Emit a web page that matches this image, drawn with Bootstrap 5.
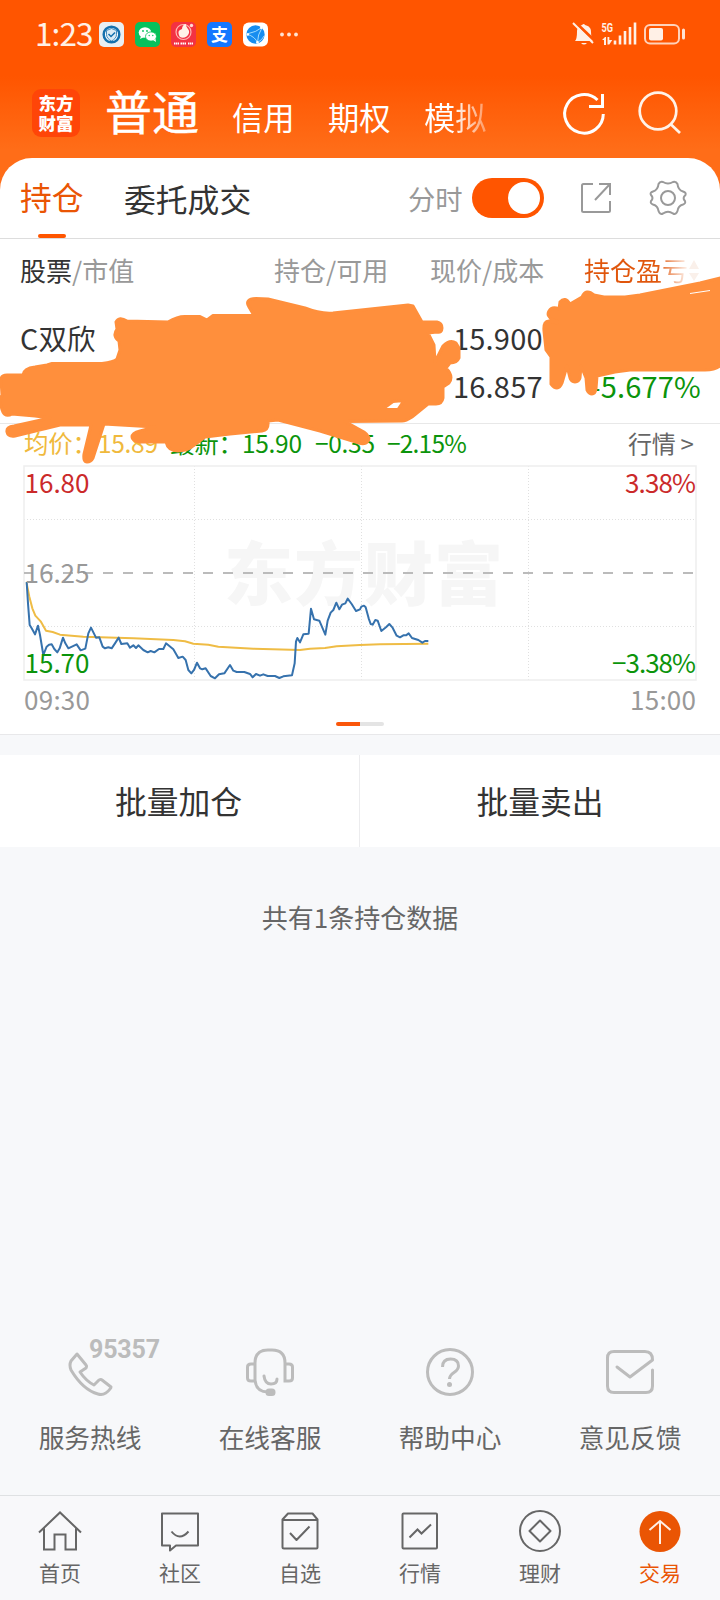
<!DOCTYPE html>
<html lang="zh-CN">
<head>
<meta charset="utf-8">
<meta name="viewport" content="width=device-width, initial-scale=1">
<title>持仓</title>
<link href="https://cdn.jsdelivr.net/npm/bootstrap@5.3.0/dist/css/bootstrap.min.css" rel="stylesheet">
<style>
body{margin:0;background:#f7f8fa;font-family:"Noto Sans CJK SC",sans-serif;color:#333}
svg{display:block;flex:none;overflow:visible}
.shell{width:720px;height:1600px;overflow:hidden;background:linear-gradient(#ff5500 0,#ff5500 76px,#ff6d18 150px,#ff6d18 200px,#f7f8fa 200px)}
.status{height:68px;padding-left:35px;padding-right:32px;color:#fff0e6}
.clock{width:64px;font-size:31.5px;letter-spacing:-.9px;line-height:64px;height:68px}
.apps{gap:11px}
.mast{height:90px;color:#fff;padding-left:32px;white-space:nowrap}
.brand{width:48px;height:48px;border-radius:9px;background:#ff4508;font-size:17.5px;line-height:19.5px;font-weight:900;text-align:center;padding-top:4px;margin-top:21px}
.acct{font-size:31.3px;line-height:40px;margin-top:29px;flex:none}
.acct-on{font-size:47px;line-height:60px;margin-top:12px;margin-left:25px;width:127px;flex:none;-webkit-text-stroke:.4px #fff}
.fade-end{background:linear-gradient(90deg,#fff 45%,rgba(255,255,255,.35));-webkit-background-clip:text;background-clip:text;color:transparent}
.sheet{background:#fff;border-radius:32px 32px 0 0;height:578px;border-bottom:1px solid #e8e8ea}
.tabs-row{height:81px;border-bottom:1px solid #ddd;padding:0 33px 0 20px;font-size:31.8px;line-height:77px}
.tab-on{color:#ea5504;width:104px;position:relative}
.tab-on::after{content:"";position:absolute;left:18px;bottom:0;width:28px;height:4px;border-radius:2px;background:#ff5500}
.minute{font-size:27.3px;color:#999;margin-left:auto;width:64px}
.toggle-on{width:72px;height:40px;border-radius:20px;background:#ff5500;padding:4px;margin-right:36px}
.knob{width:32px;height:32px;border-radius:50%;background:#fff}
.thead-row{height:64px;padding-left:20px;font-size:26px;line-height:62px;color:#999;white-space:nowrap}
.thead-row>*{flex:none}
.fade-sort{background:linear-gradient(90deg,#e0560c 70%,rgba(234,85,4,.12) 98%);-webkit-background-clip:text;background-clip:text;color:transparent}
.holding{height:121px;padding:10px 19px 0 20px;font-size:29px;line-height:48px;border-bottom:1px solid #e8e8e8}
.holding>div{letter-spacing:.2px}
.stock{font-size:28.5px;width:433px;padding-top:1px}
.down{color:#0b940b}
.info{height:36px;padding-left:24px;font-size:24.5px;line-height:38px;letter-spacing:-.3px;white-space:nowrap}
.info>*{flex:none}
.pager{width:48px;height:4px;border-radius:2px;margin:3px auto 0;background:linear-gradient(90deg,#fa560a 50%,#e4e4e4 50%)}
.batch{height:92px;margin-top:20px;background:#fff;font-size:31.8px;line-height:90px}
.batch>:first-child{border-right:1px solid #ececee;padding-right:2px}
.count{height:144px;font-size:26px;line-height:140px;color:#666}
.help{margin-top:339px;height:165px;color:#666;font-size:25.7px}
.help svg{height:80px}
.help .col span{display:block;line-height:50px;padding-top:2px}
.bottom-bar{height:105px;border-top:1px solid #dfe1e3;background:#f8f8fa;color:#666;font-size:21px}
.bottom-bar svg{margin:14px auto 0}
.bottom-bar span{display:block;line-height:32px;margin-top:4px}
.bottom-bar .now{color:#ea5504}
.ink{left:0;top:0;pointer-events:none}
</style>
</head>
<body>
<div class="shell d-flex flex-column position-relative">
  <header>
    <div class="status d-flex align-items-center">
      <div class="clock">1:23</div>
      <div class="apps d-flex">
        <svg width="25" height="25" viewBox="0 0 25 25"><rect width="25" height="25" rx="5" fill="#e9eef2"/><circle cx="12.500" cy="12.500" r="7.800" fill="#fff" stroke="#1470ad" stroke-width="2.500"/><path d="M12.500 6.500l5 2v4c0 3-2 5-5 6.500-3-1.500-5-3.500-5-6.500v-4z" fill="#dcebf4" stroke="#1470ad" stroke-width=".8"/><path d="M9.500 12l2.500 2.500 4-4" fill="none" stroke="#1470ad" stroke-width="1.500"/></svg>
        <svg width="25" height="25" viewBox="0 0 25 25"><rect width="25" height="25" rx="5" fill="#07c15c"/><ellipse cx="10" cy="10.500" rx="6.300" ry="5.300" fill="#fff"/><path d="M6 14l-1 3 4-2z" fill="#fff"/><ellipse cx="16" cy="14.500" rx="5.500" ry="4.600" fill="#fff" stroke="#07c15c" stroke-width=".8"/><path d="M18 18l3 2-.5-3z" fill="#fff"/><g fill="#07c15c"><circle cx="8" cy="9" r=".9"/><circle cx="12" cy="9" r=".9"/><circle cx="14.200" cy="13.500" r=".7"/><circle cx="17.800" cy="13.500" r=".7"/></g></svg>
        <svg width="25" height="25" viewBox="0 0 25 25"><rect width="25" height="25" rx="5" fill="#f33242"/><circle cx="12.500" cy="10" r="7.500" fill="none" stroke="#ffb9b4" stroke-width="1.200"/><path d="M9 15c-2-3-2-6 0-7l2-1c0-3 2-5 4-5-1 3 4 5 3 9-1 4-6 6-9 4z" fill="#fff4e8"/><circle cx="20.500" cy="3.500" r="1.700" fill="#ffd9d2"/><path d="M3 21.500h5M9.500 21.500h6M17 21.500h5" stroke="#fff" stroke-width="2" stroke-dasharray="1.500 .5"/></svg>
        <svg width="25" height="25" viewBox="0 0 25 25"><rect width="25" height="25" rx="5" fill="#1677ff"/><text x="12.500" y="18.800" font-size="17" font-weight="700" text-anchor="middle" fill="#fff">支</text></svg>
        <svg width="25" height="25" viewBox="0 0 26 25"><rect width="26" height="25" rx="6" fill="#fff"/><circle cx="13" cy="12.500" r="9.500" fill="#168df0"/><g fill="none" stroke="#b6e8ff" stroke-width=".9"><path d="M4 12Q14 10 20 5M4 12q9 3 11 9M20 5q-5 8-5 16M15 21q5-3 7-7"/></g><circle cx="5" cy="12.500" r="1.300" fill="#fff"/><circle cx="19" cy="5.500" r="1.300" fill="#fff"/><circle cx="15" cy="20.500" r="1.300" fill="#fff"/></svg>
        <svg width="20" height="25" viewBox="0 0 20 25" fill="#ffe3d2"><circle cx="3" cy="12.500" r="1.900"/><circle cx="10" cy="12.500" r="1.900"/><circle cx="17" cy="12.500" r="1.900"/></svg>
      </div>
      <svg class="ms-auto" style="margin-top:2px" width="116" height="26" viewBox="0 0 116 26" fill="#fff0e6"><path d="M3 19q2-2 2-9c0-4 2-6 5-7q2-2 3 0c4 1 6 3 6 7q0 7 3 9zM9 21h6q-3 3-6 0z"/><path d="M2 -1l22 21" stroke="#ff5500" stroke-width="3"/><path d="M1 1l20 20" stroke="#fff0e6" stroke-width="2"/><text x="29.500" y="10" font-family="Roboto" font-weight="700" font-size="12.500" textLength="11.500" lengthAdjust="spacingAndGlyphs">5G</text><path d="M30 18l3-3h1v8h-2v-5zM35.500 15h1.800v3h3l-3 4.500h-1.800z"/><path d="M43 22.500v-4M48 22.500v-9M53 22.500V9M58 22.500V5M63 22.500V.5" stroke="#fff0e6" stroke-width="2.600"/><rect x="73" y="3" width="34" height="18.500" rx="5" fill="none" stroke="#ffd2ba" stroke-width="2"/><rect x="77" y="6" width="14" height="12.500" rx="2"/><path d="M111.500 8v8" stroke="#ffe2d2" stroke-width="3" stroke-linecap="round"/></svg>
    </div>
    <nav class="mast d-flex align-items-start">
      <div class="brand">东方<br>财富</div>
      <div class="acct-on">普通</div>
      <div class="acct" style="width:96px">信用</div>
      <div class="acct" style="width:96px">期权</div>
      <div class="acct fade-end">模拟</div>
      <svg width="44" height="44" viewBox="0 0 44 44" style="margin:23px 0 0 75px" fill="none" stroke="#fff" stroke-width="3"><path d="M35.500 9A19.300 19.300 0 1 0 41.300 23M40.500 3v12.500H27"/></svg>
      <svg width="44" height="44" viewBox="0 0 44 44" style="margin:23px 0 0 32px" fill="none" stroke="#fff2e8" stroke-width="2.700"><circle cx="20" cy="20" r="18.300"/><path d="M32.500 33l9.500 9"/></svg>
    </nav>
  </header>

  <section class="sheet">
    <div class="tabs-row d-flex align-items-center">
      <div class="tab-on h-100">持仓</div>
      <div>委托成交</div>
      <div class="minute">分时</div>
      <div class="toggle-on d-flex justify-content-end"><div class="knob"></div></div>
      <svg width="32" height="32" viewBox="0 0 32 32" fill="none" stroke="#999" stroke-width="2"><path d="M13 2H3.500Q2 2 2 3.500v25Q2 30 3.500 30h25q1.500 0 1.500-1.500V19M19 2h11v11M30 2L15 18"/></svg>
      <svg width="38" height="38" viewBox="0 0 38 38" style="margin-left:37px" fill="none" stroke="#999" stroke-width="2"><path d="M14 3Q19 6 24 3Q27 2 28.500 5Q29 11 34 12.500Q37.500 13.500 36.500 16Q33 19 36 22Q37 24.500 34 25.500Q29 27 28.500 32Q27 36 24 34.500Q19 31 14 34.500Q11 36 9.500 32Q9 27 4 25.500Q1 24.500 2 22Q5 19 2 16Q.5 13.500 4 12.500Q9 11 9.500 5Q11 2 14 3z" stroke-linejoin="round"/><circle cx="19" cy="19" r="7"/></svg>
    </div>
    <div class="thead-row d-flex">
      <div style="width:254px"><span style="color:#333">股票</span>/市值</div>
      <div style="width:156px">持仓/可用</div>
      <div style="width:154px">现价/成本</div>
      <div class="fade-sort">持仓盈亏</div>
      <svg width="12" height="24" viewBox="0 0 12 24" style="margin-top:20px" fill="#faf0ea"><path d="M6 1l5 9H1zM6 22l5-8H1z"/></svg>
    </div>
    <div class="holding d-flex">
      <div class="stock">C双欣</div>
      <div>15.900<br>16.857</div>
      <div class="down ms-auto align-self-start" style="padding-top:48px">-5.677%</div>
    </div>
    <div class="info d-flex down">
      <div style="width:74px;color:#f0b93c">均价：</div>
      <div style="width:72px;color:#f0b93c">15.89</div>
      <div style="width:72px">最新：</div>
      <div style="width:73px">15.90</div>
      <div style="width:72px">−0.35</div>
      <div style="width:241px;letter-spacing:-.8px">−2.15%</div>
      <div style="color:#666;font-size:24px">行情 &gt;</div>
    </div>
    <svg width="720" height="259" viewBox="0 0 720 259">
      <text x="224" y="140" font-size="69" font-weight="900" fill="#f6f6f6" textLength="279">东方财富</text>
      <g fill="none" stroke="#e0e0e0" stroke-dasharray="1 2"><path d="M24 59.500h672M24 166.500h672M194.500 6v214M361.500 6v214M528.500 6v214"/></g>
      <rect x="24" y="6" width="672" height="214" fill="none" stroke="#eee" stroke-width="1.500"/>
      <path d="M24 113h672" stroke="#bbb" stroke-width="2" stroke-dasharray="10 10" stroke-dashoffset="1"/>
      <g transform="scale(.33333)" fill="none" stroke-width="6" stroke-linejoin="round">
        <path stroke="#efbc45" d="M80 370 88 410 97 445 106 467 122 484 138 512 158 516 180 524 250 530 400 535 520 540 555 544 580 551 625 554 655 560 760 566 900 570 930 566 975 564 1010 559 1080 555 1140 553 1285 551"/>
        <path stroke="#3672ad" d="M80 366 84 430 89 495 95 505 105 523 114 497 120 525 130 585 140 560 147 554 155 553 163 567 172 577 179 565 189 533 196 550 205 565 230 553 242 571 256 566 265 520 273 503 288 533 298 532 308 560 315 565 325 562 335 565 345 550 356 533 364 552 382 550 390 563 400 556 408 564 415 556 430 570 443 577 452 573 463 577 477 567 490 567 498 550 520 568 535 594 548 590 557 600 565 630 574 640 582 630 591 608 600 625 607 628 617 625 632 648 645 655 657 643 673 640 690 615 700 632 710 636 733 636 750 642 758 652 768 642 780 647 790 643 803 648 825 648 838 654 850 649 876 646 884 610 888 545 892 534 900 547 910 523 926 521 933 446 942 478 958 482 976 524 983 482 992 458 1000 450 1009 428 1018 448 1026 434 1036 430 1043 416 1055 432 1068 453 1080 448 1084 440 1092 437 1097 442 1106 475 1112 492 1118 494 1126 480 1133 482 1144 513 1158 502 1168 492 1177 502 1190 527 1200 532 1210 526 1218 526 1226 520 1236 534 1255 540 1267 548 1275 543 1285 543"/>
      </g>
      <g font-size="26">
        <text x="24.500" y="33" fill="#cb2a2a" textLength="65">16.80</text>
        <text x="24.500" y="123" fill="#999" textLength="65">16.25</text>
        <text x="24.500" y="213" fill="#0b940b" textLength="65">15.70</text>
        <text x="24" y="250" fill="#999" textLength="66">09:30</text>
        <text x="625" y="33" fill="#cb2a2a" textLength="71">3.38%</text>
        <text x="612" y="213" fill="#0b940b" textLength="84">−3.38%</text>
        <text x="630" y="250" fill="#999" textLength="66">15:00</text>
      </g>
    </svg>
    <div class="pager"></div>
  </section>

  <div class="batch d-flex text-center">
    <div style="width:360px">批量加仓</div>
    <div style="width:360px">批量卖出</div>
  </div>
  <div class="count text-center">共有1条持仓数据</div>

  <div class="help row g-0 text-center">
    <div class="col"><svg width="180" height="80" viewBox="0 0 180 80" fill="none" stroke="#bcbcbc" stroke-width="3" stroke-linejoin="round"><path d="M77 24l9 11q1 1 0 3l-6 4q6 9 14 13l5-5q2-1 3 0l9 7q0 1-1 2-5 7-12 5Q83 60 71 40q-2-5 0-9z"/><text x="89" y="28" font-family="Roboto" font-weight="700" font-size="25" fill="#bcbcbc" stroke="none" textLength="71">95357</text></svg><span>服务热线</span></div>
    <div class="col"><svg width="180" height="80" viewBox="0 0 180 80" fill="none" stroke="#bcbcbc" stroke-width="3"><path d="M75 52V33q0-13 13-13h4q13 0 13 13v18M75 50q1 12 13 12M75 34h-4q-3.500 0-3.500 3v11q0 3 3.500 3h4M105 34h4q3.500 0 3.500 3v11q0 3-3.500 3h-4z"/><path d="M84 46q1 8 7 8t6-5" stroke-linecap="round"/><rect x="87" y="60" width="7" height="4.500" rx="2" fill="#bcbcbc"/></svg><span>在线客服</span></div>
    <div class="col"><svg width="180" height="80" viewBox="0 0 180 80" fill="none" stroke="#bcbcbc" stroke-width="3"><circle cx="90" cy="42" r="22.500"/><path d="M82.500 37q0-8 8-8t8 7c0 7-9 6-9 13"/><circle cx="89.500" cy="54.500" r="2.500" fill="#bcbcbc" stroke="none"/></svg><span>帮助中心</span></div>
    <div class="col"><svg width="180" height="80" viewBox="0 0 180 80" fill="none" stroke="#bcbcbc" stroke-width="3" stroke-linejoin="round" stroke-linecap="round"><path d="M112.500 40v16q0 6.500-6.500 6.500H74q-6.500 0-6.500-6.500V28q0-6.500 6.500-6.500h31q7.500 0 7.500 8.500L90 47 77 37"/></svg><span>意见反馈</span></div>
  </div>

  <nav class="bottom-bar row g-0 text-center">
    <div class="col"><svg width="44" height="42" viewBox="0 0 44 42" fill="none" stroke="#666" stroke-width="2"><path d="M1 22.500L22 2.500l21 20M6 18.500v21h10.500v-15h11v15H38v-21"/></svg><span>首页</span></div>
    <div class="col"><svg width="44" height="42" viewBox="0 0 44 42" fill="none" stroke="#666" stroke-width="2" stroke-linejoin="round"><path d="M4 3.500h36v32H18l-6 5v-5H4zM13.500 21.500q8 10 17 0"/></svg><span>社区</span></div>
    <div class="col"><svg width="44" height="42" viewBox="0 0 44 42" fill="none" stroke="#666" stroke-width="2" stroke-linejoin="round"><path d="M4.500 9.500L10 3.500h24.500l5 6v28q0 1-1 1H6q-1.500 0-1.500-1.500zM4.500 10H39.500M12 23l6.500 7 13-13.500"/></svg><span>自选</span></div>
    <div class="col"><svg width="44" height="42" viewBox="0 0 44 42" fill="none" stroke="#666" stroke-width="2"><rect x="4.500" y="3.500" width="34.500" height="35" rx="1"/><path d="M11.500 27.500l8-8 4 4 9.500-9"/></svg><span>行情</span></div>
    <div class="col"><svg width="44" height="42" viewBox="0 0 44 42" fill="none" stroke="#666" stroke-width="2" stroke-linejoin="round"><circle cx="22" cy="21" r="20"/><path d="M22 10.500L32.500 21 22 31.500 11.500 21z"/></svg><span>理财</span></div>
    <div class="col now"><svg width="44" height="42" viewBox="0 0 44 42" fill="none" stroke="#fff0e6" stroke-width="2"><circle cx="22" cy="21.500" r="20.500" fill="#ea5504" stroke="none"/><path d="M22 34V11M11.500 20L22 11l10.500 9"/></svg><span>交易</span></div>
  </nav>

  <svg class="ink position-absolute" width="720" height="480" viewBox="0 0 720 480" fill="#ff8f3c" stroke="#ff8f3c" stroke-width="3" stroke-linejoin="round">
    <path fill-rule="evenodd" d="M116 322Q119 316 127 321L168 322Q178 316 186 316.500L200 316.500 207 320 213 315.500 254 315.500 249 307Q244 299 256 298.500L268 299 305 308Q320 314 333 313L408 305 413 306 422 322 437 322Q442 323 442 328T437 332L428 333 434 345 435 362 443 346Q450 339 456 343L459 348V358Q457 363 450 363L446 368Q454 376 449 383L443 387V398Q442 404 436 404L428 404 412 417Q406 421 402 421L345 421.500 364 432Q371 437 368 441T359 443L320 431 278 420 268 421Q269 430 262 431L230 434 205 437 193 446Q188 451 178 451Q168 451 166 442L140 442Q132 441 132 437T140 431L155 427 104 424 93 458Q91 462 87 462T84 454L91 425 60 425 15 436Q8 437 7 432T14 426L50 418 35 416 12 414Q3 419 1 405Q-1 400 2 395L1 380Q1 375 7 375L23 375Q24 368 35 367L47 365 52 363.500 102 363.500Q114 362 117 359L120 350 119 341Q112 336 117 329zM382 409.500L398 409.500 404 400.500 393 401.500z"/>
    <path d="M544 331Q543 320 550 321L557 323V321L553 320Q546 316 549 311T559 309L560 302Q565 296 570 304L582 297Q586 288 594 295L604 297 625 297 640 295 700 283 724 277 722 363Q719 370 705 370L630 370 615 372 597 376 596 389Q595 394 592 394T587 390L586 378 581 366 580 378Q579 382 575 382T570 378L567 366 562 383Q560 388 557 388T551 384V357L546 350z"/>
    <path d="M690 293.500L710 290.500" stroke="#fff" stroke-width="1"/>
  </svg>
</div>
<script src="https://cdn.jsdelivr.net/npm/bootstrap@5.3.0/dist/js/bootstrap.bundle.min.js"></script>
</body>
</html>
